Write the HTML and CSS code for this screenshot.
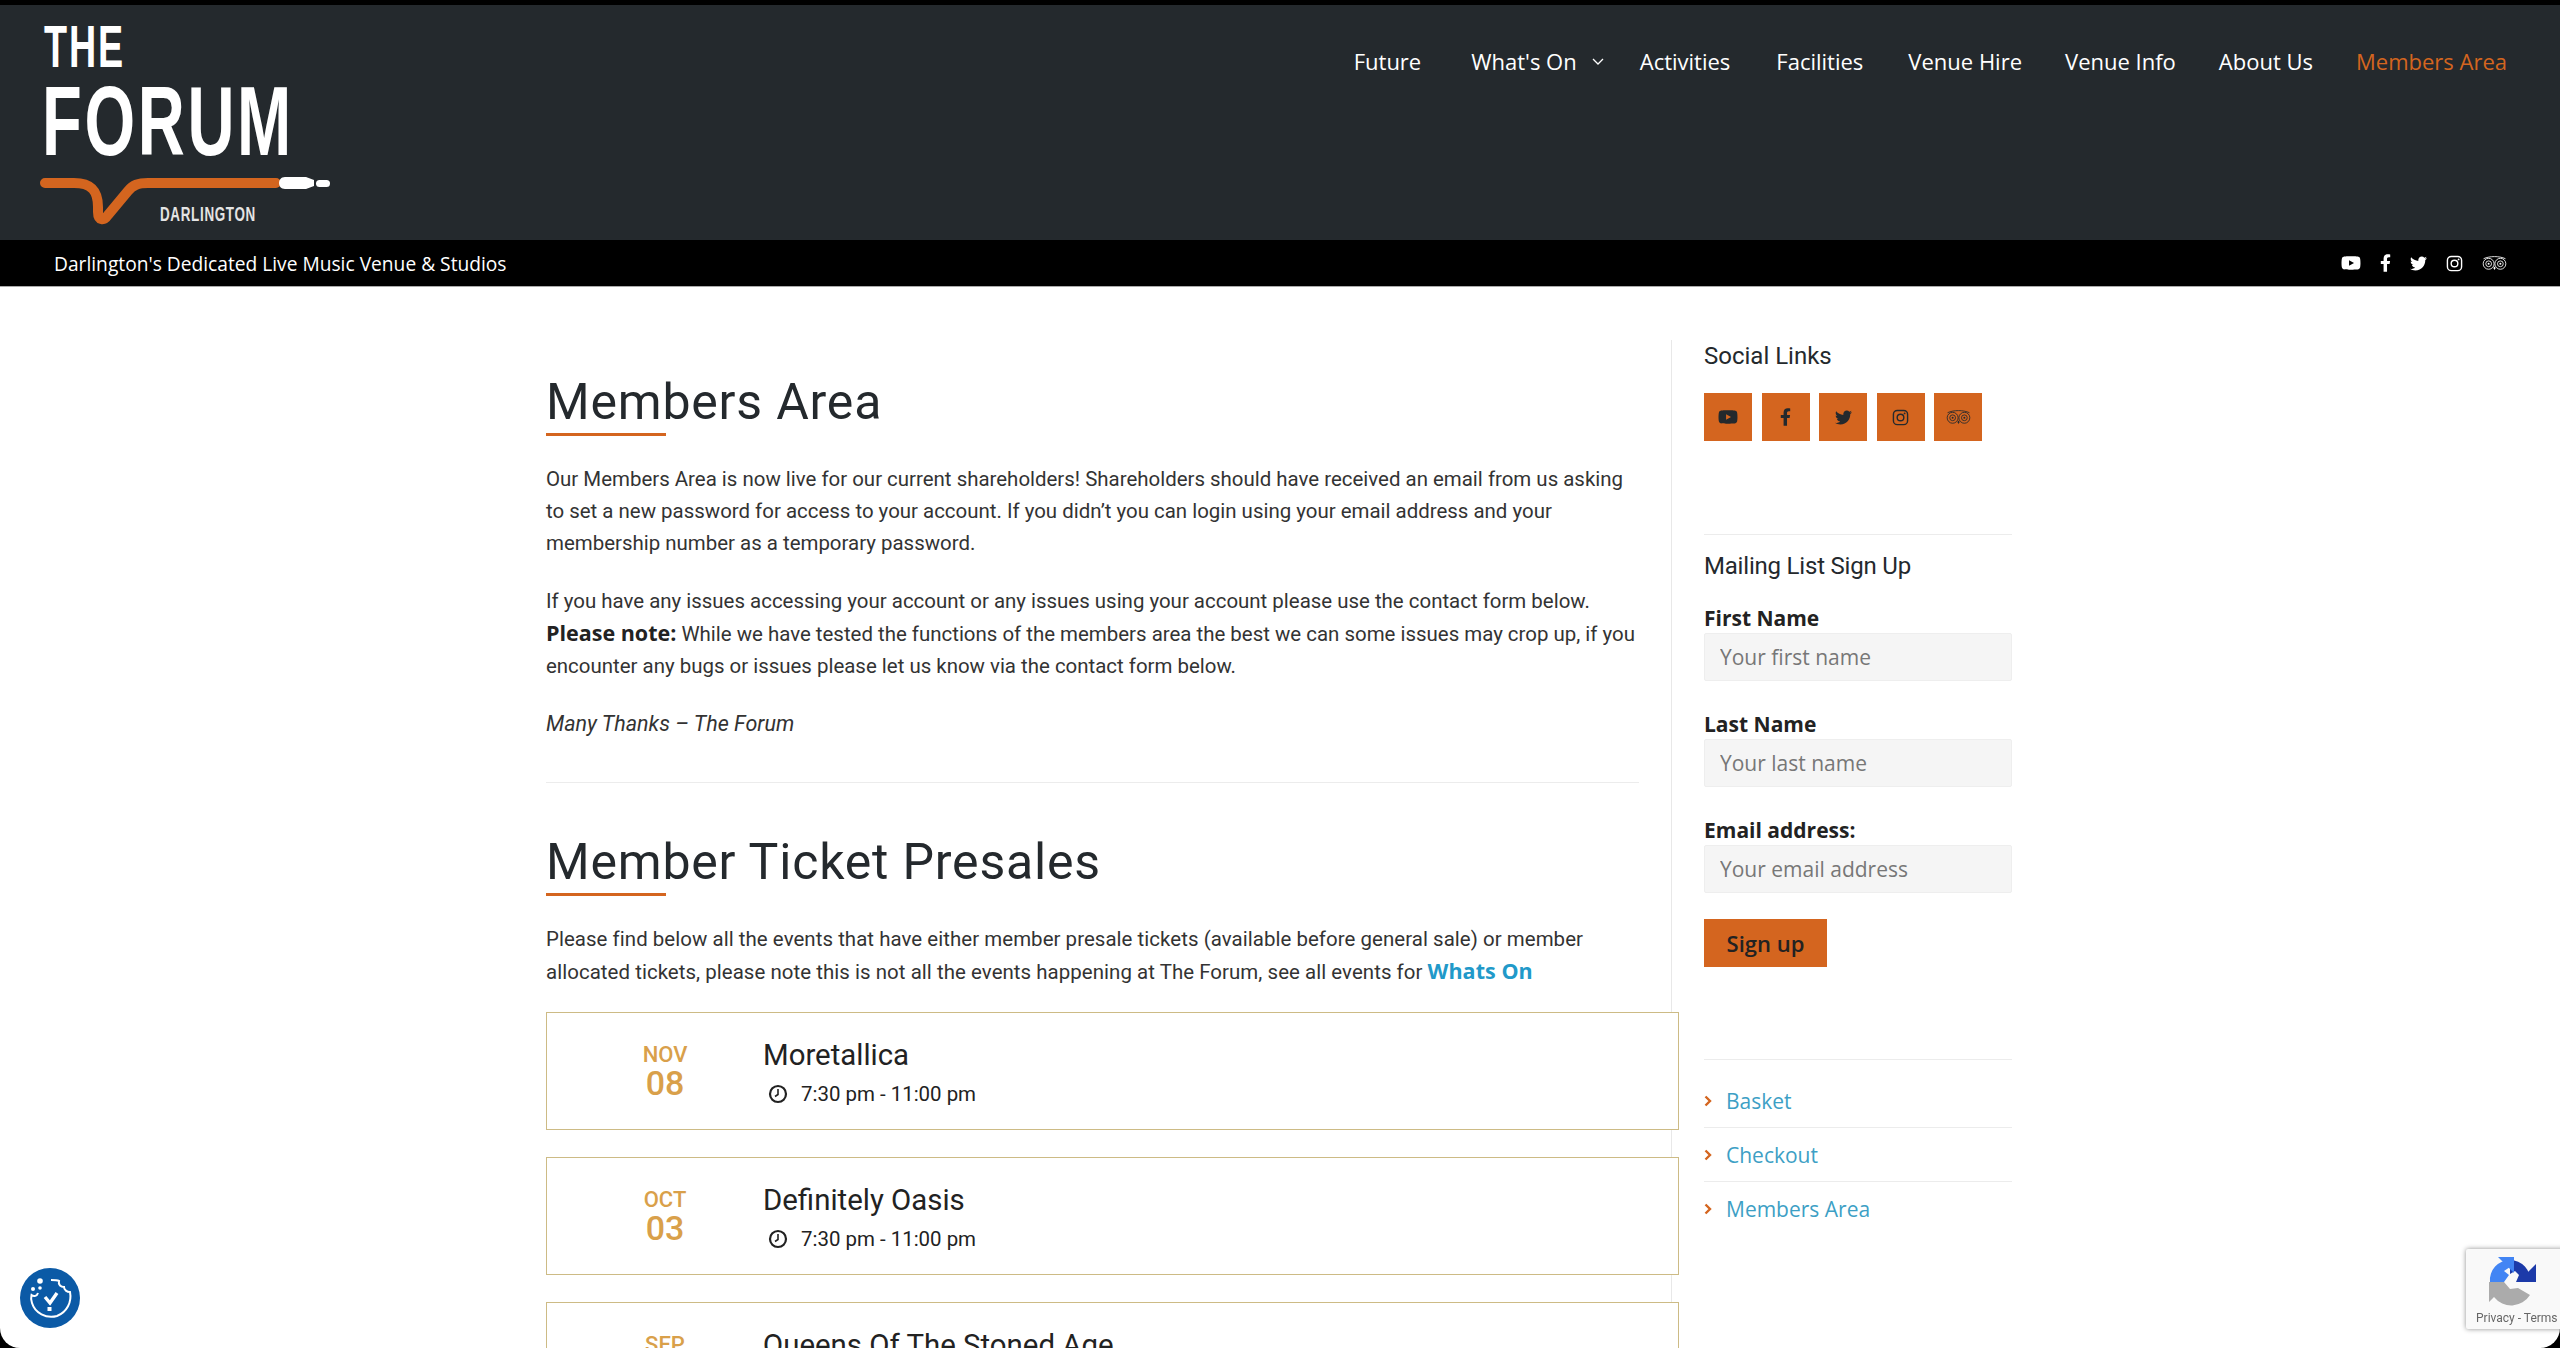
FILE: index.html
```html
<!DOCTYPE html>
<html>
<head>
  <meta charset="utf-8">
  <title>Members Area - The Forum</title>
  <link rel="stylesheet" href="styles.css">
</head>
<body>

  <svg class="icon-defs" width="0" height="0">
    <symbol id="i-youtube" viewBox="0 0 576 512"><path fill="currentColor" d="M549.655 124.083c-6.281-23.65-24.787-42.276-48.284-48.597C458.781 64 288 64 288 64S117.22 64 74.629 75.486c-23.497 6.322-42.003 24.947-48.284 48.597-11.412 42.867-11.412 132.305-11.412 132.305s0 89.438 11.412 132.305c6.281 23.65 24.787 41.5 48.284 47.821C117.22 448 288 448 288 448s170.78 0 213.371-11.486c23.497-6.321 42.003-24.171 48.284-47.821 11.412-42.867 11.412-132.305 11.412-132.305s0-89.438-11.412-132.305zm-317.51 213.508V175.185l142.739 81.205-142.739 81.201z"/></symbol>
    <symbol id="i-facebook" viewBox="0 0 320 512"><path fill="currentColor" d="M279.14 288l14.22-92.66h-88.91v-60.13c0-25.35 12.42-50.06 52.24-50.06h40.42V6.26S260.43 0 225.36 0c-73.22 0-121.08 44.38-121.08 124.72v70.62H22.89V288h81.39v224h100.17V288z"/></symbol>
    <symbol id="i-twitter" viewBox="0 0 512 512"><path fill="currentColor" d="M459.37 151.716c.325 4.548.325 9.097.325 13.645 0 138.72-105.583 298.558-298.558 298.558-59.452 0-114.68-17.219-161.137-47.106 8.447.974 16.568 1.299 25.34 1.299 49.055 0 94.213-16.568 130.274-44.832-46.132-.975-84.792-31.188-98.112-72.772 6.498.974 12.995 1.624 19.818 1.624 9.421 0 18.843-1.3 27.614-3.573-48.081-9.747-84.143-51.98-84.143-102.985v-1.299c13.969 7.797 30.214 12.67 47.431 13.319-28.264-18.843-46.781-51.005-46.781-87.391 0-19.492 5.197-37.36 14.294-52.954 51.655 63.675 129.3 105.258 216.365 109.807-1.624-7.797-2.599-15.918-2.599-24.04 0-57.828 46.782-104.934 104.934-104.934 30.213 0 57.502 12.67 76.67 33.137 23.715-4.548 46.456-13.32 66.599-25.34-7.798 24.366-24.366 44.833-46.132 57.827 21.117-2.273 41.584-8.122 60.426-16.243-14.292 20.791-32.161 39.308-52.628 54.253z"/></symbol>
    <symbol id="i-instagram" viewBox="0 0 24 24"><g fill="none" stroke="currentColor" stroke-width="2"><rect x="2" y="2" width="20" height="20" rx="5.5"/><circle cx="12" cy="12" r="4.7"/></g><circle cx="17.8" cy="6.2" r="1.3" fill="currentColor"/></symbol>
    <symbol id="i-tripadvisor" viewBox="0 0 32 20"><g fill="none" stroke="currentColor" stroke-width="1.100"><circle cx="8.500" cy="11" r="7"/><circle cx="23.500" cy="11" r="7"/><circle cx="8.500" cy="11" r="3.700"/><circle cx="23.500" cy="11" r="3.700"/><path d="M2 4.500c8-3.600 20-3.600 28 0"/></g><circle cx="8.500" cy="11" r="1.300" fill="currentColor"/><circle cx="23.500" cy="11" r="1.300" fill="currentColor"/><path fill="currentColor" d="M14.500 16.500l1.500 2.500 1.500-2.500-1.500-2z"/></symbol>
    <symbol id="i-clock" viewBox="0 0 20 20"><circle cx="10" cy="10" r="8" fill="none" stroke="currentColor" stroke-width="2.200"/><path d="M10 5v5.500l-3 2" fill="none" stroke="currentColor" stroke-width="1.600"/></symbol>
    <symbol id="i-chevron" viewBox="0 0 8 12"><path d="M1.500 1.500L6 6l-4.500 4.500" fill="none" stroke="currentColor" stroke-width="2.400"/></symbol>
  </svg>

  <div class="page">

    <header class="site-header">
      <a class="logo">
        <svg width="330" height="235" viewBox="0 0 330 235">
          <text x="44" y="62" class="logo-the" textLength="81" lengthAdjust="spacingAndGlyphs">THE</text>
          <text x="42" y="150" class="logo-forum" textLength="252" lengthAdjust="spacingAndGlyphs">FORUM</text>
          <path d="M45 178H74C92 178 98 186 98 202V207C98 216 104 216 108 210L128 186C133 180 138 178 148 178H276" fill="none" stroke="#d4651f" stroke-width="10" stroke-linecap="round"/>
          <path d="M285 172H306L314 175V181L306 184H285C277 184 277 172 285 172Z" fill="#fff"/>
          <rect x="316" y="175" width="14" height="7" rx="3.500" fill="#fff"/>
          <text x="160" y="216" class="logo-town" textLength="96" lengthAdjust="spacingAndGlyphs">DARLINGTON</text>
        </svg>
      </a>
      <ul class="main-nav">
        <li class="nav-first"><a>Future</a></li>
        <li class="nav-drop"><a>What's On</a><svg width="14" height="9" viewBox="0 0 14 9"><path d="M2 2l5 5 5-5" fill="none" stroke="#fff" stroke-width="1.300"/></svg></li>
        <li class="nav-activities"><a>Activities</a></li>
        <li class="nav-facilities"><a>Facilities</a></li>
        <li><a>Venue Hire</a></li>
        <li><a>Venue Info</a></li>
        <li><a>About Us</a></li>
        <li><a class="active">Members Area</a></li>
      </ul>
    </header>

    <div class="sub-bar">
      <span class="tagline">Darlington's Dedicated Live Music Venue &amp; Studios</span>
      <div class="sub-icons">
        <svg class="ic-yt"><use href="#i-youtube"/></svg>
        <svg class="ic-fb"><use href="#i-facebook"/></svg>
        <svg class="ic-tw"><use href="#i-twitter"/></svg>
        <svg class="ic-ig"><use href="#i-instagram"/></svg>
        <svg class="ic-ta"><use href="#i-tripadvisor"/></svg>
      </div>
    </div>

    <div class="content">
      <main class="main-col">
        <h1 class="page-title">Members Area</h1>
        <p>Our Members Area is now live for our current shareholders! Shareholders should have received an email from us asking to set a new password for access to your account. If you didn’t you can login using your email address and your membership number as a temporary password.</p>
        <p>If you have any issues accessing your account or any issues using your account please use the contact form below.<br><strong>Please note:</strong> While we have tested the functions of the members area the best we can some issues may crop up, if you encounter any bugs or issues please let us know via the contact form below.</p>
        <p><em>Many Thanks – The Forum</em></p>
        <hr class="main-rule">
        <h1 class="page-title">Member Ticket Presales</h1>
        <p class="intro">Please find below all the events that have either member presale tickets (available before general sale) or member allocated tickets, please note this is not all the events happening at The Forum, see all events for <a class="whats-on">Whats On</a></p>

        <article class="event">
          <div class="event-date"><span class="month">NOV</span><span class="day">08</span></div>
          <div class="event-info">
            <h3>Moretallica</h3>
            <div class="event-time"><svg><use href="#i-clock"/></svg>7:30 pm - 11:00 pm</div>
          </div>
        </article>
        <article class="event">
          <div class="event-date"><span class="month">OCT</span><span class="day">03</span></div>
          <div class="event-info">
            <h3>Definitely Oasis</h3>
            <div class="event-time"><svg><use href="#i-clock"/></svg>7:30 pm - 11:00 pm</div>
          </div>
        </article>
        <article class="event">
          <div class="event-date"><span class="month">SEP</span></div>
          <div class="event-info">
            <h3>Queens Of The Stoned Age</h3>
          </div>
        </article>
      </main>

      <aside class="sidebar">
        <h4 class="social-title">Social Links</h4>
        <div class="social-buttons">
          <a><svg class="ic-yt"><use href="#i-youtube"/></svg></a>
          <a><svg class="ic-fb"><use href="#i-facebook"/></svg></a>
          <a><svg class="ic-tw"><use href="#i-twitter"/></svg></a>
          <a><svg class="ic-ig"><use href="#i-instagram"/></svg></a>
          <a><svg class="ic-ta"><use href="#i-tripadvisor"/></svg></a>
        </div>

        <div class="side-rule"></div>
        <h4 class="mailing-title">Mailing List Sign Up</h4>
        <form class="signup">
          <label>First Name</label>
          <input type="text" placeholder="Your first name">
          <label>Last Name</label>
          <input type="text" placeholder="Your last name">
          <label>Email address:</label>
          <input type="text" placeholder="Your email address">
          <button type="button">Sign up</button>
        </form>

        <ul class="side-links">
          <li><svg><use href="#i-chevron"/></svg><a>Basket</a></li>
          <li><svg><use href="#i-chevron"/></svg><a>Checkout</a></li>
          <li><svg><use href="#i-chevron"/></svg><a>Members Area</a></li>
        </ul>
      </aside>
    </div>

    <a class="cookie-btn">
      <svg width="60" height="60" viewBox="0 0 60 60">
        <path d="M31 12C35 12 37 12 39 13C38 17 41 19 44 19C44 22 47 24 50 24C52 34 47 44 37 48C26 51 15 45 12 35C11 32 11 29 11.500 27C14 29 17 28 18 25" fill="none" stroke="#fff" stroke-width="2"/>
        <circle cx="20" cy="13" r="2.800" fill="#fff"/>
        <circle cx="13" cy="21" r="2" fill="#fff"/>
        <circle cx="20" cy="20" r="1.800" fill="#fff"/>
        <path d="M25 29l5 6 7-10" fill="none" stroke="#fff" stroke-width="3.400"/>
        <rect x="27.500" y="39" width="4" height="4" fill="#fff"/>
      </svg>
    </a>

    <div class="recaptcha">
      <svg width="56" height="52" viewBox="0 0 56 52">
        <path d="M46 25A20 20 0 0 0 26 3V17L31 14L35 18L32 25Z" fill="#1c3aa9"/>
        <path d="M52 25H34L52 7Z" fill="#1c3aa9"/>
        <path d="M6 25A20 20 0 0 1 26 3V10L20 14L25 18L20 25Z" fill="#4285f4"/>
        <path d="M14 0H30V16Z" fill="#4285f4"/>
        <path d="M5 25H20L26 32L34 31L46 38A22 22 0 0 1 10 40L5 45Z" fill="#ababab"/>
      </svg>
      <span>Privacy - Terms</span>
    </div>
  </div>

</body>
</html>
```

FILE: styles.css
```css
* {
  box-sizing: border-box;
}

html {
  background: #000;
}

body {
  margin: 0;
  padding-top: 5px;
  font-family: "Open Sans", "Noto Sans", sans-serif;
  color: #222;
}

.icon-defs {
  position: absolute;
}

/* rounded window corners at the bottom, black shows through */
.page {
  height: 1343px;
  overflow: hidden;
  background: #fff;
  border-radius: 0 0 20px 20px;
}

.site-header {
  height: 235px;
  background: #24292d;
  display: flex;
  justify-content: space-between;
  padding-right: 53px;
}

.logo {
  display: block;
  height: 235px;
}

.logo svg {
  display: block;
}

.logo-the,
.logo-forum,
.logo-town {
  font-family: "Liberation Sans", sans-serif;
  font-weight: 700;
  fill: #fff;
}

.logo-the {
  font-size: 60px;
  letter-spacing: 3px;
}

.logo-forum {
  font-size: 98px;
  letter-spacing: 4px;
}

.logo-town {
  font-size: 20px;
  letter-spacing: 1px;
  fill: #e4e4e4;
}

.main-nav {
  list-style-type: none;
  margin: 0;
  padding: 41px 0 0;
  display: flex;
  align-items: flex-start;
  gap: 43px;
  font-size: 22px;
  font-weight: 500;
  line-height: 30px;
  color: #fff;
}

.nav-first {
  margin-right: 7px;
}

.nav-drop {
  display: flex;
  align-items: center;
  gap: 14px;
  margin-right: -8px;
  white-space: nowrap;
}

.nav-activities {
  margin-right: 3px;
}

.nav-facilities {
  margin-right: 2px;
}

.main-nav .active {
  color: #d4651f;
}

.sub-bar {
  height: 47px;
  background: #000;
  border-bottom: 1px solid #aaa;
  display: flex;
  justify-content: space-between;
  align-items: center;
  padding: 0 53px 0 54px;
  color: #fff;
  font-size: 19.200px;
}

.sub-icons {
  display: flex;
  align-items: center;
  gap: 19px;
  color: #fff;
}

.ic-yt { width: 20px; height: 18px; }
.ic-fb { width: 11px; height: 18px; }
.ic-tw { width: 17px; height: 17px; }
.ic-ig { width: 17px; height: 17px; }
.ic-ta { width: 25px; height: 16px; }

.content {
  width: 1468px;
  margin: 0 auto;
  padding-top: 53px;
  display: grid;
  grid-template-columns: 1125px 343px;
}

.main-col {
  padding-right: 32px;
  font-family: Roboto, sans-serif;
  font-size: 20.450px;
  line-height: 32px;
  color: #333;
}

.page-title {
  margin: 32px 0 27px;
  font-size: 50px;
  font-weight: 400;
  letter-spacing: 0.800px;
  line-height: 60px;
  color: #24292d;
}

.page-title::after {
  content: "";
  display: block;
  width: 120px;
  height: 3px;
  margin-top: 1px;
  background: #d4651f;
}

.main-col p {
  margin: 0 0 26px;
}

.main-col strong {
  font-family: "Open Sans", sans-serif;
  font-size: 21.500px;
  color: #222;
}

.main-col em {
  font-size: 21.500px;
}

.main-rule {
  border: 0;
  border-top: 1px solid #ececec;
  margin: 42px 0 49px;
}

.main-col .intro {
  margin-bottom: 24px;
  letter-spacing: 0.050px;
}

.whats-on {
  font-family: "Open Sans", sans-serif;
  font-size: 21.500px;
  font-weight: 700;
  color: #2199c9;
}

.event {
  position: relative; /* so the card sits over the sidebar line */
  height: 118px;
  margin: 0 -40px 27px 0;
  padding-left: 70px;
  background: #fff;
  border: 1px solid #cdbb85;
  display: flex;
  gap: 50px;
}

.event-date {
  width: 96px;
  padding-top: 30px;
  display: flex;
  flex-direction: column;
  align-items: center;
  color: #d9a04a;
}

.month {
  font-size: 22px;
  line-height: 24px;
  font-weight: 500;
}

.day {
  font-size: 34px;
  line-height: 32px;
  font-weight: 500;
}

.event-info h3 {
  margin: 24px 0 0;
  font-size: 29.400px;
  font-weight: 400;
  line-height: 36px;
  color: #222;
}

.event-time {
  margin-top: 6px;
  padding-left: 5px;
  display: flex;
  align-items: center;
  gap: 13px;
  line-height: 30px;
  color: #222;
}

.event-time svg {
  width: 20px;
  height: 20px;
}

.sidebar {
  border-left: 1px solid #e8e8e8;
  padding: 0 2px 0 32px;
  height: 1100px;
}

.sidebar h4 {
  margin: 0;
  font-family: Roboto, sans-serif;
  font-size: 24px;
  font-weight: 400;
  line-height: 30px;
  color: #24292d;
}

.social-title {
  padding-top: 1px;
}

.sidebar .mailing-title {
  letter-spacing: -0.200px;
}

.social-buttons {
  margin-top: 22px;
  display: flex;
  gap: 9.600px;
}

.social-buttons a {
  width: 48px;
  height: 48px;
  background: #d4651f;
  color: #24292d;
  display: flex;
  align-items: center;
  justify-content: center;
}

.side-rule {
  margin: 93px 0 16px;
  border-top: 1px solid #ececec;
}

.signup {
  margin-top: 24px;
  display: flex;
  flex-direction: column;
  align-items: flex-start;
}

.signup label {
  font-size: 21px;
  font-weight: 700;
  line-height: 26px;
  color: #222;
}

.signup input {
  width: 100%;
  height: 48px;
  margin: 2px 0 30px;
  padding: 0 15px;
  background: #f5f5f5;
  border: 1px solid #eee;
  border-radius: 2px;
  font-family: inherit;
  font-size: 21px;
  outline: none;
}

.signup input::placeholder {
  color: #777;
  opacity: 1;
}

.signup button {
  width: 123px;
  height: 48px;
  margin-top: -4px;
  background: #d4651f;
  border: 0;
  font-family: inherit;
  font-size: 22px;
  font-weight: 600;
  color: #222;
}

.side-links {
  list-style-type: none;
  margin: 92px 0 0;
  padding: 0;
  border-top: 1px solid #ececec;
  font-size: 21px;
  color: #3d9fc5;
}

.side-links li {
  height: 54px;
  display: flex;
  align-items: center;
  gap: 14px;
  border-bottom: 1px solid #ececec;
}

.side-links li:first-child {
  height: 68px;
  padding-top: 14px;
}

.side-links li:last-child {
  border-bottom: 0;
}

.side-links svg {
  width: 8px;
  height: 12px;
  color: #d4651f;
}

.cookie-btn {
  position: fixed;
  left: 20px;
  top: 1268px;
  width: 60px;
  height: 60px;
  border-radius: 50%;
  background: #0b5aa6;
}

.cookie-btn svg {
  display: block;
}

.recaptcha {
  position: fixed;
  left: 2466px;
  top: 1249px;
  width: 110px;
  height: 80px;
  background: #f9f9f9;
  border-radius: 2px;
  box-shadow: 0 0 5px rgba(0, 0, 0, 0.45);
  padding: 8px 0 0 18px;
  font-family: Roboto, sans-serif;
  font-size: 12px;
  color: #666;
}

.recaptcha svg {
  display: block;
}

.recaptcha span {
  display: block;
  margin: 2px 0 0 -8px;
  line-height: 14px;
  white-space: nowrap;
}
```
